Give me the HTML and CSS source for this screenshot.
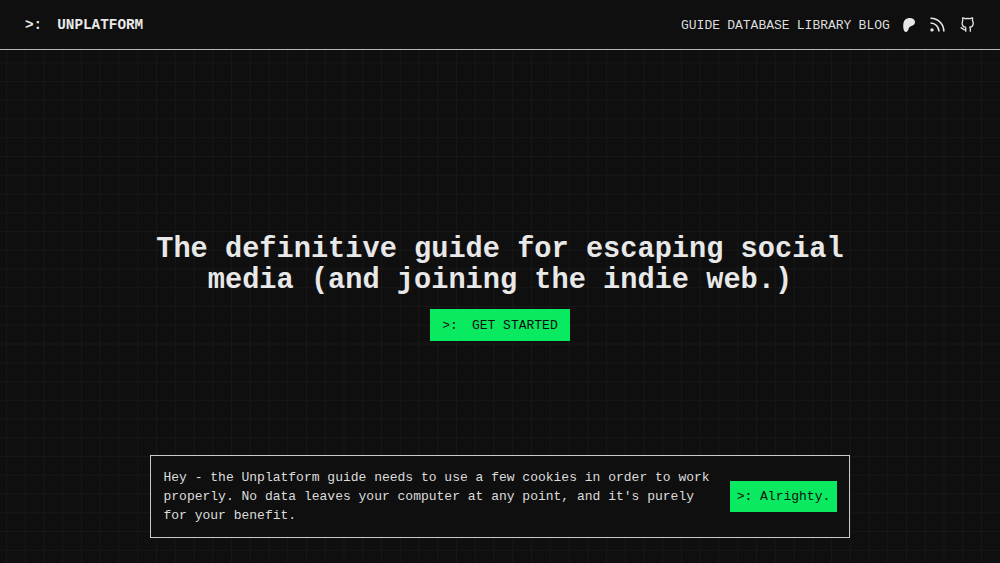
FILE: index.html
```
<!DOCTYPE html>
<html lang="en">
<head>
    <meta charset="UTF-8">
    <meta name="viewport" content="width=device-width, initial-scale=1.0">
    <title>Unplatform</title>
    <link rel="stylesheet" href="styles.css">
</head>
<body>
<header class="header">
    <a class="brand" href="#"><span class="prompt">&gt;:</span>UNPLATFORM</a>
    <nav class="nav">
        <a class="link" href="#">GUIDE</a>
        <a class="link" href="#">DATABASE</a>
        <a class="link" href="#">LIBRARY</a>
        <a class="link" href="#">BLOG</a>
        <div class="icons">
            <a href="#" aria-label="Patreon">
                <svg class="icon patreon" viewBox="0 0 12 14" fill="currentColor"><path d="M6.2.1C3 .3.8 2.300.4 5.300 0 8.200.1 13.800 3 13.900c2.200.1 2.300-2.800 3.200-4.300.9-1.500 2.500-1.500 3.800-2.300C11.300 6.500 12 5.300 12 3.900 11.900 1.400 9.300-.1 6.200.1z"/></svg>
            </a>
            <a href="#" aria-label="RSS">
                <svg class="icon rss" viewBox="0 0 15 15" fill="none" stroke="currentColor" stroke-width="1.6"><path d="M.5 1.200A13 13 0 0 1 13.800 14.500M.5 6A8.500 8.500 0 0 1 9 14.500"/><circle cx="2" cy="12.900" r="1.700" fill="currentColor" stroke="none"/></svg>
            </a>
            <a href="#" aria-label="GitHub">
                <svg class="icon github" viewBox="1 0.500 22 23" fill="none" stroke="currentColor" stroke-width="2"><path d="M9.300 23v-4.500c0-1 .1-1.600-.6-2.400C5.800 15.700 3.800 14.400 3.800 9.900c0-1.700.2-2.900 1.100-3.900-.4-1.200-.5-3-.2-4.200 1.400 0 2.800.5 4 1.300 2.200-.4 4.800-.4 7 0 1.200-.8 2.600-1.300 4-1.300.3 1.200.2 3-.2 4.200.9 1 1.300 2.200 1.300 3.900 0 4.500-2.200 5.800-5.100 6.200.5.700.6 1.400.6 2.400V23M9.300 20.300c-4.800.8-4.300-3.300-7.800-3.300"/></svg>
            </a>
        </div>
    </nav>
</header>

<main class="hero">
    <h1 class="title">The definitive guide for escaping social media (and joining the indie web.)</h1>
    <a class="btn start" href="#"><span class="prompt">&gt;:</span>GET STARTED</a>
</main>

<div class="cookies">
    <p>Hey - the Unplatform guide needs to use a few cookies in order to work properly. No data leaves your computer at any point, and it's purely for your benefit.</p>
    <button class="btn accept">&gt;: Alrighty.</button>
</div>
</body>
</html>
```

FILE: styles.css
```
* {
    box-sizing: border-box;
}

body {
    display: flex;
    flex-direction: column;
    align-items: center;
    height: 100vh;
    margin: 0;
    overflow: hidden;
    background-color: #0f0f0f;
    background-image:
        linear-gradient(to right, #171717 1px, transparent 1px),
        linear-gradient(to bottom, #171717 1px, transparent 1px);
    background-size: 18.75px 18.75px;
    background-position: 6px 6px;
    color: #e8e8e8;
    font-family: "Liberation Mono", monospace;
    font-size: 13px;
}

a {
    color: inherit;
    text-decoration: none;
}

.header {
    display: flex;
    justify-content: space-between;
    align-items: center;
    width: 100%;
    height: 50px;
    padding: 0 25px;
    background-color: #0f0f0f;
    border-bottom: 1px solid #b8b8b8;
}

.brand {
    font-size: 14.33px;
    font-weight: bold;
}

.brand .prompt {
    margin-right: 15px;
}

.nav {
    display: flex;
    align-items: center;
    gap: 7.2px;
}

.link {
    padding-top: 1px;
    color: #dcdcdc;
}

.icons {
    display: flex;
    align-items: center;
    gap: 15px;
    margin-left: 6px;
}

.icon {
    display: block;
    width: 15px;
    height: 15px;
}

.patreon {
    width: 12px;
    height: 14px;
}

.hero {
    display: flex;
    flex-direction: column;
    align-items: center;
    width: 700px;
    margin-top: 184px;
}

.title {
    margin: 0 0 12.5px;
    font-size: 28.65px;
    line-height: 31.25px;
    text-align: center;
}

.btn {
    display: flex;
    align-items: center;
    height: 31px;
    background-color: #0aea61;
    border: 0;
    color: #0f0f0f;
    font-family: inherit;
    font-size: 13px;
    white-space: nowrap;
}

.start {
    height: 32px;
    padding: 0 12.5px;
}

.start .prompt {
    margin-right: 14px;
}

.cookies {
    display: flex;
    justify-content: space-between;
    align-items: center;
    width: 700px;
    height: 83px;
    margin-top: auto;
    margin-bottom: 25px;
    padding: 0 12.5px;
    background-color: #0f0f0f;
    border: 1px solid #cacaca;
}

.cookies p {
    width: 550px;
    margin: 0;
    padding-top: 2px;
    color: #dcdcdc;
    line-height: 18.75px;
}

.accept {
    padding: 0 6.25px;
}
```
